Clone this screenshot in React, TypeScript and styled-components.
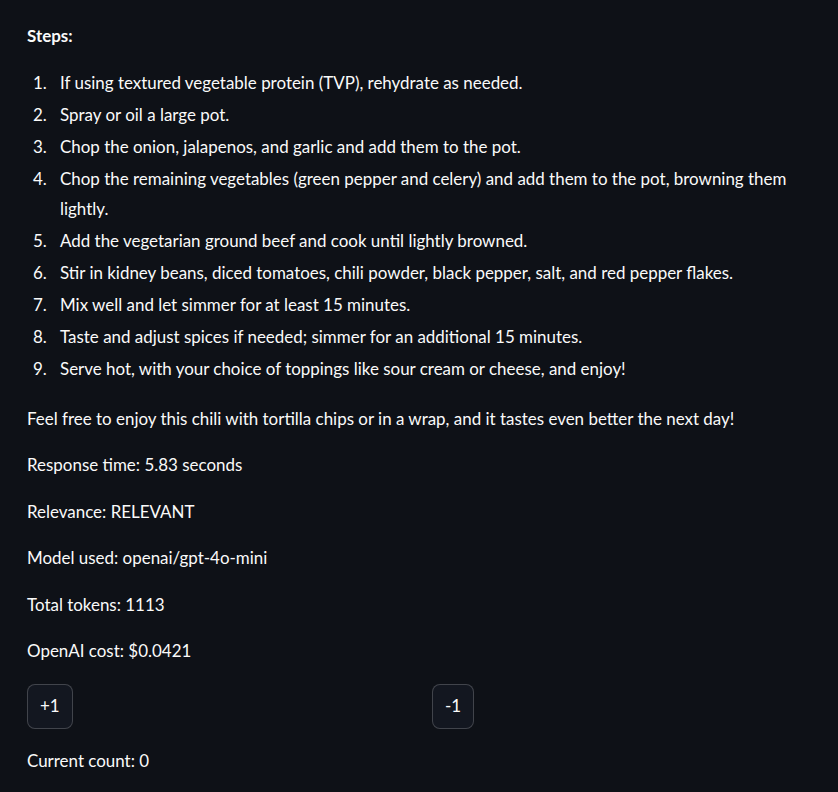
import React from "react";
import styled, { createGlobalStyle } from "styled-components";

const Global = createGlobalStyle`
  html, body { margin: 0; padding: 0; background: #0e1117; }
  body {
    color: rgb(250, 250, 250);
    font-family: Lato, "Liberation Sans", sans-serif;
    font-size: 16.95px;
    -webkit-font-smoothing: antialiased;
  }
`;

const Page = styled.main`
  display: flex;
  flex-direction: column;
  gap: 16.5px;
  padding: 21px 27px 20px 27px;
  min-height: 792px;
  box-sizing: border-box;
  background: #0e1117;
`;

const Para = styled.p<{ $bold?: boolean; $top?: number }>`
  margin: ${(p) => p.$top ?? 0}px 0 0 0;
  line-height: 30px;
  font-weight: ${(p) => (p.$bold ? 700 : 400)};
`;

const Steps = styled.ol`
  list-style: none;
  counter-reset: step;
  margin: 0 0 3px 0;
  padding: 0;
  display: flex;
  flex-direction: column;
  gap: 2.1px;
`;

const Step = styled.li`
  counter-increment: step;
  display: grid;
  grid-template-columns: 33px 1fr;
  line-height: 30px;
  padding-right: 14px;
  &::before {
    content: counter(step) ".";
    padding-left: 6px;
  }
`;

const ButtonRow = styled.div`
  display: grid;
  grid-template-columns: 1fr 1fr;
  column-gap: 16px;
  margin: 1px -10px 0 0;
`;

const Button = styled.button`
  justify-self: start;
  height: 45px;
  padding: 0 12px;
  border-radius: 8px;
  border: 1px solid rgba(250, 250, 250, 0.2);
  background: rgb(19, 23, 32);
  color: rgb(250, 250, 250);
  font: inherit;
  line-height: 1;
  cursor: pointer;
`;

const steps = [
  "If using textured vegetable protein (TVP), rehydrate as needed.",
  "Spray or oil a large pot.",
  "Chop the onion, jalapenos, and garlic and add them to the pot.",
  "Chop the remaining vegetables (green pepper and celery) and add them to the pot, browning them lightly.",
  "Add the vegetarian ground beef and cook until lightly browned.",
  "Stir in kidney beans, diced tomatoes, chili powder, black pepper, salt, and red pepper flakes.",
  "Mix well and let simmer for at least 15 minutes.",
  "Taste and adjust spices if needed; simmer for an additional 15 minutes.",
  "Serve hot, with your choice of toppings like sour cream or cheese, and enjoy!",
];

export default function App() {
  return (
    <>
      <Global />
      <Page>
        <Para $bold>Steps:</Para>
        <Steps>
          {steps.map((s) => (
            <Step key={s}>{s}</Step>
          ))}
        </Steps>
        <Para>
          Feel free to enjoy this chili with tortilla chips or in a wrap, and it tastes even better the next day!
        </Para>
        <Para>Response time: 5.83 seconds</Para>
        <Para>Relevance: RELEVANT</Para>
        <Para>Model used: openai/gpt-4o-mini</Para>
        <Para>Total tokens: 1113</Para>
        <Para>OpenAI cost: $0.0421</Para>
        <ButtonRow>
          <Button>+1</Button>
          <Button>-1</Button>
        </ButtonRow>
        <Para $top={1}>Current count: 0</Para>
      </Page>
    </>
  );
}
